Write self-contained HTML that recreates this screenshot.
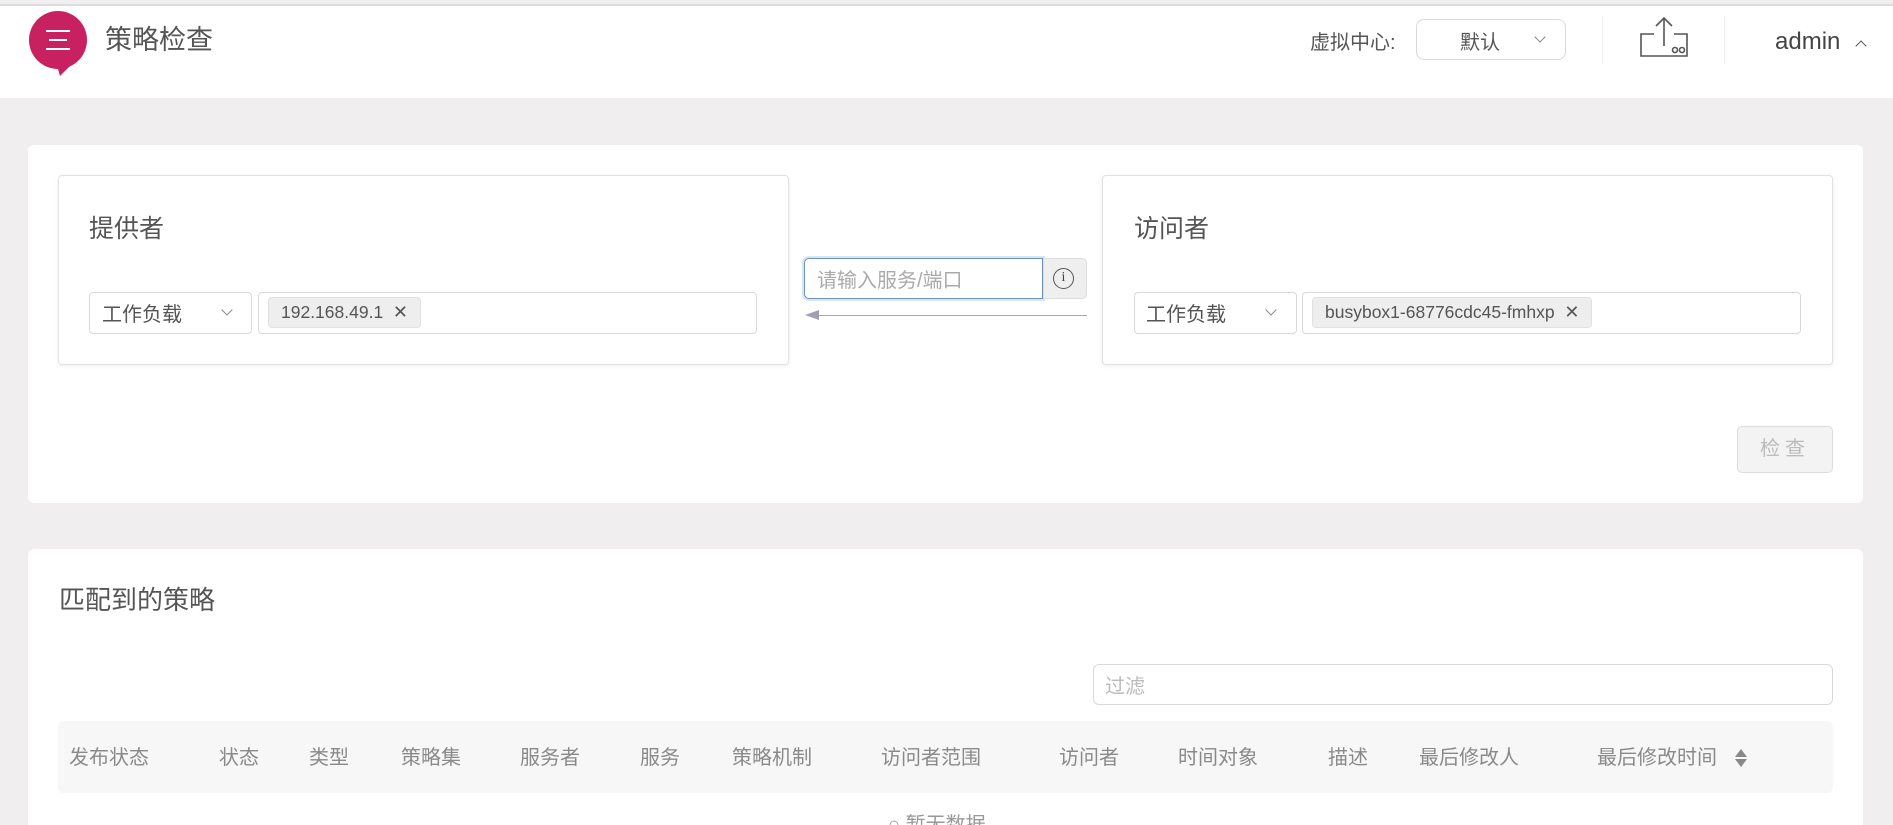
<!DOCTYPE html>
<html style="width:1893px;height:825px;overflow:hidden"><head><meta charset="utf-8"><style>
*{box-sizing:border-box;margin:0;padding:0}
body{width:1893px;height:825px;overflow:hidden;background:#f0eeef;font-family:"Liberation Sans","Noto Sans CJK SC",sans-serif;color:#555;position:relative}
.a{position:absolute}
.hdr{left:0;width:1893px;border-top:2px solid #ddd;top:4px;height:94px;background:#fff}
.card{background:#fff;border-radius:6px}
.box{background:#fff;border:1px solid #e2e2e2;border-radius:4px;box-shadow:0 1px 4px rgba(0,0,0,.08)}
.inp{border:1px solid #d9d9d9;border-radius:4px;background:#fff}
.chev{display:inline-block;width:8px;height:8px;border-right:1.3px solid #888;border-bottom:1.3px solid #888;transform:rotate(45deg)}
.tag{background:#eeeeee;border:1px solid #e0e0e0;border-radius:4px;font-size:17.5px;color:#555;line-height:29px;padding:0 12px}
.th{top:741px;font-size:20px;color:#8a8a8a}
</style></head><body>
<div class="a hdr"></div>
<div class="a" style="left:29px;top:11px;width:58px;height:58px;border-radius:50%;background:#c8215f"></div>
<div class="a" style="left:56px;top:62px;width:0;height:0;border-left:4px solid transparent;border-right:14px solid transparent;border-top:14px solid #c8215f"></div>
<div class="a" style="left:46px;top:30px;width:24px;height:2px;background:#fff"></div>
<div class="a" style="left:49px;top:39px;width:18px;height:2px;background:#fff"></div>
<div class="a" style="left:46px;top:48px;width:24px;height:2px;background:#fff"></div>
<div class="a" style="left:105px;top:18px;font-size:27px;color:#555">策略检查</div>
<div class="a" style="left:1310px;top:26px;font-size:20px;color:#555">虚拟中心:</div>
<div class="a inp" style="left:1416px;top:19px;width:150px;height:41px;border-radius:8px"></div>
<div class="a" style="left:1460px;top:26px;font-size:20px;color:#555">默认</div>
<div class="a chev" style="left:1536px;top:33px"></div>
<div class="a" style="left:1602px;top:16px;width:1px;height:48px;background:#eee"></div>
<svg class="a" style="left:1638px;top:16px" width="52" height="42" viewBox="0 0 52 42" fill="none" stroke="#555" stroke-width="1.6"><path d="M26 2V30M18 10L26 2L34 10M16 18H3V40H49V18H36"/><circle cx="37" cy="34" r="2.5"/><circle cx="44" cy="34" r="2.5"/></svg>
<div class="a" style="left:1724px;top:16px;width:1px;height:48px;background:#eee"></div>
<div class="a" style="left:1775px;top:28px;font-size:24px;color:#444">admin</div>
<div class="a chev" style="left:1857px;top:42px;transform:rotate(225deg);border-color:#555"></div>

<div class="a card" style="left:28px;top:145px;width:1835px;height:358px"></div>
<div class="a box" style="left:58px;top:175px;width:731px;height:190px"></div>
<div class="a" style="left:89px;top:209px;font-size:25px;color:#555">提供者</div>
<div class="a inp" style="left:89px;top:292px;width:163px;height:42px"></div>
<div class="a" style="left:102px;top:298px;font-size:20px">工作负载</div>
<div class="a chev" style="left:223px;top:306px"></div>
<div class="a inp" style="left:258px;top:292px;width:499px;height:42px"></div>
<div class="a tag" style="left:268px;top:297px">192.168.49.1 &nbsp;<span style="font-size:18px">✕</span></div>

<div class="a" style="left:804px;top:258px;width:239px;height:41px;border:1.5px solid #6f93b5;border-radius:5px 0 0 5px;box-shadow:0 0 0 2px #d6e6f5;background:#fff"></div>
<div class="a" style="left:817px;top:264px;font-size:20px;color:#aaa">请输入服务/端口</div>
<div class="a" style="left:1043px;top:258px;width:44px;height:41px;background:#efefef;border:1px solid #ddd;border-radius:0 5px 5px 0"></div>
<div class="a" style="left:1053px;top:268px;width:21px;height:21px;border:1.4px solid #555;border-radius:50%;font-size:14px;text-align:center;line-height:18px;color:#444;font-family:'Liberation Serif',serif">i</div>
<div class="a" style="left:815px;top:315px;width:272px;height:1px;background:#aaa"></div>
<div class="a" style="left:805px;top:310px;border-right:14px solid #a0a0b0;border-top:5px solid transparent;border-bottom:5px solid transparent"></div>

<div class="a box" style="left:1102px;top:175px;width:731px;height:190px"></div>
<div class="a" style="left:1134px;top:209px;font-size:25px;color:#555">访问者</div>
<div class="a inp" style="left:1134px;top:292px;width:163px;height:42px"></div>
<div class="a" style="left:1146px;top:298px;font-size:20px">工作负载</div>
<div class="a chev" style="left:1267px;top:306px"></div>
<div class="a inp" style="left:1302px;top:292px;width:499px;height:42px"></div>
<div class="a tag" style="left:1312px;top:297px">busybox1-68776cdc45-fmhxp &nbsp;<span style="font-size:18px">✕</span></div>

<div class="a" style="left:1737px;top:426px;width:96px;height:47px;background:#f3f3f3;border:1px solid #ddd;border-radius:5px;font-size:20px;color:#bbb;text-align:center;line-height:45px;letter-spacing:5px">检查</div>

<div class="a card" style="left:28px;top:549px;width:1835px;height:276px;border-radius:6px 6px 0 0"></div>
<div class="a" style="left:59px;top:580px;font-size:26px;color:#555">匹配到的策略</div>
<div class="a inp" style="left:1093px;top:664px;width:740px;height:41px;border-radius:6px"></div>
<div class="a" style="left:1105px;top:670px;font-size:20px;color:#bbb">过滤</div>
<div class="a" style="left:58px;top:721px;width:1775px;height:72px;background:#f7f7f7;border-radius:6px"></div>
<div class="a th" style="left:69px">发布状态</div>
<div class="a th" style="left:219px">状态</div>
<div class="a th" style="left:309px">类型</div>
<div class="a th" style="left:401px">策略集</div>
<div class="a th" style="left:520px">服务者</div>
<div class="a th" style="left:640px">服务</div>
<div class="a th" style="left:732px">策略机制</div>
<div class="a th" style="left:881px">访问者范围</div>
<div class="a th" style="left:1059px">访问者</div>
<div class="a th" style="left:1178px">时间对象</div>
<div class="a th" style="left:1328px">描述</div>
<div class="a th" style="left:1419px">最后修改人</div>
<div class="a th" style="left:1597px">最后修改时间</div>
<div class="a" style="left:1735px;top:749px;border-bottom:8px solid #888;border-left:6px solid transparent;border-right:6px solid transparent"></div>
<div class="a" style="left:1735px;top:759px;border-top:8px solid #888;border-left:6px solid transparent;border-right:6px solid transparent"></div>
<div class="a" style="left:888px;top:813px;font-size:20px;color:#999;line-height:24px;height:12px;overflow:hidden">○ 暂无数据</div>
</body></html>
